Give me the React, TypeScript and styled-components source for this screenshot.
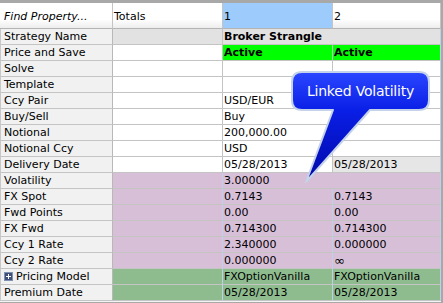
import React from "react";
import styled, { createGlobalStyle, css } from "styled-components";

const GlobalStyle = createGlobalStyle`
  html, body { margin: 0; padding: 0; }
  body {
    background: #a8a8a8;
    font-family: "DejaVu Sans", Verdana, sans-serif;
    font-size: 11px;
    color: #000;
  }
`;

const Page = styled.div`
  position: relative;
  width: 443px;
  height: 303px;
  padding-top: 3px;
  box-sizing: border-box;
  background: #a8a8a8;
  overflow: hidden;
`;

const Grid = styled.div`
  display: grid;
  grid-template-columns: 113px 110px 110px 108px;
  grid-template-rows: 26px;
  grid-auto-rows: 16px;
  width: 441px;
  background: #ffffff;
  border-bottom: 1px solid #f4f4f4;
`;

const HeaderCell = styled.div<{ $italic?: boolean; $selected?: boolean; $pad: number }>`
  box-sizing: border-box;
  display: flex;
  align-items: center;
  padding: 2px 0 0 ${(p) => p.$pad}px;
  font-style: ${(p) => (p.$italic ? "italic" : "normal")};
  border-right: 1px solid #c4c4c4;
  border-bottom: 1px solid #b4b4b4;
  white-space: nowrap;
  ${(p) =>
    p.$selected
      ? css`
          background: #9dcbfb;
        `
      : css`
          background: linear-gradient(#ffffff 0%, #ffffff 65%, #ededed 100%);
        `}
`;

const LabelCell = styled.div`
  box-sizing: border-box;
  display: flex;
  align-items: center;
  gap: 3px;
  padding: 0 0 0 3px;
  background: #f1f1f1;
  border-left: 1px solid #c8c8c8;
  border-right: 1px solid #b8b8b8;
  border-bottom: 1px solid #c4c4c4;
  white-space: nowrap;
  line-height: 15px;
`;

const DataCell = styled.div<{
  $bg: string;
  $bold?: boolean;
  $span?: number;
  $edge: string;
}>`
  box-sizing: border-box;
  display: flex;
  align-items: center;
  padding: 0 0 0 1px;
  background: ${(p) => p.$bg};
  font-weight: ${(p) => (p.$bold ? "bold" : "normal")};
  grid-column: span ${(p) => p.$span ?? 1};
  border-right: 1px solid ${(p) => p.$edge};
  border-bottom: 1px solid #c4c4c4;
  white-space: nowrap;
  overflow: hidden;
  line-height: 15px;
`;

const Infinity = styled.span`
  font-size: 13px;
  line-height: 15px;
`;

const ExpandIcon = styled.span`
  box-sizing: border-box;
  display: inline-flex;
  width: 9px;
  height: 9px;
  background: #3f4f78;
  border: 1px solid #8090b0;
  position: relative;
  &::before,
  &::after {
    content: "";
    position: absolute;
    background: #ffffff;
  }
  &::before {
    left: 1px;
    top: 3px;
    width: 5px;
    height: 1px;
  }
  &::after {
    left: 3px;
    top: 1px;
    width: 1px;
    height: 5px;
  }
`;

const Callout = styled.div`
  position: absolute;
  left: 286px;
  top: 67px;
  width: 150px;
  height: 120px;
`;

const CalloutText = styled.div`
  position: absolute;
  left: 6px;
  top: 16px;
  width: 137px;
  text-align: center;
  font-family: "DejaVu Sans", Verdana, sans-serif;
  font-size: 14px;
  letter-spacing: -0.2px;
  color: #ffffff;
  white-space: nowrap;
`;

const WHITE = "#ffffff";
const GRAY = "#e2e2e2";
const THISTLE = "#d8bfd8";
const SEA = "#8fbc8f";
const LIME = "#00ff00";
const GRID_GRAY = "#c4c4c4";
const GRID_BLUE = "#bcd2ec";

type Cell = { text: string; bold?: boolean; span?: number; bg?: string };
type Row = { label: string; total: string; colored?: boolean; expand?: boolean; cells: Cell[] };

const rows: Row[] = [
  { label: "Strategy Name", total: GRAY, cells: [{ text: "Broker Strangle", bold: true, span: 2 }] },
  {
    label: "Price and Save",
    total: WHITE,
    cells: [
      { text: "Active", bold: true, bg: LIME },
      { text: "Active", bold: true, bg: LIME },
    ],
  },
  { label: "Solve", total: WHITE, cells: [{ text: "" }, { text: "" }] },
  { label: "Template", total: WHITE, cells: [{ text: "" }, { text: "" }] },
  { label: "Ccy Pair", total: WHITE, cells: [{ text: "USD/EUR" }, { text: "" }] },
  { label: "Buy/Sell", total: WHITE, cells: [{ text: "Buy" }, { text: "" }] },
  { label: "Notional", total: WHITE, cells: [{ text: "200,000.00" }, { text: "" }] },
  { label: "Notional Ccy", total: WHITE, cells: [{ text: "USD" }, { text: "" }] },
  {
    label: "Delivery Date",
    total: WHITE,
    cells: [{ text: "05/28/2013" }, { text: "05/28/2013", bg: "#e6e6e6" }],
  },
  { label: "Volatility", total: THISTLE, colored: true, cells: [{ text: "3.00000", span: 2 }] },
  { label: "FX Spot", total: THISTLE, colored: true, cells: [{ text: "0.7143" }, { text: "0.7143" }] },
  { label: "Fwd Points", total: THISTLE, colored: true, cells: [{ text: "0.00" }, { text: "0.00" }] },
  { label: "FX Fwd", total: THISTLE, colored: true, cells: [{ text: "0.714300" }, { text: "0.714300" }] },
  { label: "Ccy 1 Rate", total: THISTLE, colored: true, cells: [{ text: "2.340000" }, { text: "0.000000" }] },
  { label: "Ccy 2 Rate", total: THISTLE, colored: true, cells: [{ text: "0.000000" }, { text: "∞" }] },
  {
    label: "Pricing Model",
    total: SEA,
    colored: true,
    expand: true,
    cells: [{ text: "FXOptionVanilla" }, { text: "FXOptionVanilla" }],
  },
  {
    label: "Premium Date",
    total: SEA,
    colored: true,
    cells: [{ text: "05/28/2013" }, { text: "05/28/2013" }],
  },
];

export default function App() {
  return (
    <>
      <GlobalStyle />
      <Page>
        <Grid>
          <HeaderCell $italic $pad={4}>Find Property...</HeaderCell>
          <HeaderCell $pad={1}>Totals</HeaderCell>
          <HeaderCell $selected $pad={1}>1</HeaderCell>
          <HeaderCell $pad={1}>2</HeaderCell>
          {rows.map((r) => (
            <React.Fragment key={r.label}>
              <LabelCell>
                {r.expand && <ExpandIcon />}
                {r.label}
              </LabelCell>
              <DataCell $bg={r.total} $edge={r.colored ? GRID_BLUE : GRID_GRAY} />
              {r.cells.map((c, i) => {
                const last = i === r.cells.length - 1;
                return (
                  <DataCell
                    key={i}
                    $bg={c.bg ?? r.total}
                    $bold={c.bold}
                    $span={c.span}
                    $edge={last || r.colored ? GRID_BLUE : GRID_GRAY}
                  >
                    {c.text === "∞" ? <Infinity>∞</Infinity> : c.text}
                  </DataCell>
                );
              })}
            </React.Fragment>
          ))}
        </Grid>
        <Callout>
          <svg width="150" height="120" viewBox="0 0 150 120">
            <defs>
              <linearGradient id="cfill" x1="0" y1="0" x2="0" y2="1">
                <stop offset="0" stopColor="#2a46ff" />
                <stop offset="0.35" stopColor="#0a1fe6" />
                <stop offset="1" stopColor="#0008a8" />
              </linearGradient>
            </defs>
            <path
              d="M 16 5 H 133 Q 143 5 143 15 V 33 Q 143 43 133 43 H 84 L 20 115 L 47 43 H 16 Q 6 43 6 33 V 15 Q 6 5 16 5 Z"
              fill="url(#cfill)"
              stroke="#c4d2ea"
              strokeWidth="2"
              strokeLinejoin="round"
            />
          </svg>
          <CalloutText>Linked Volatility</CalloutText>
        </Callout>
      </Page>
    </>
  );
}
